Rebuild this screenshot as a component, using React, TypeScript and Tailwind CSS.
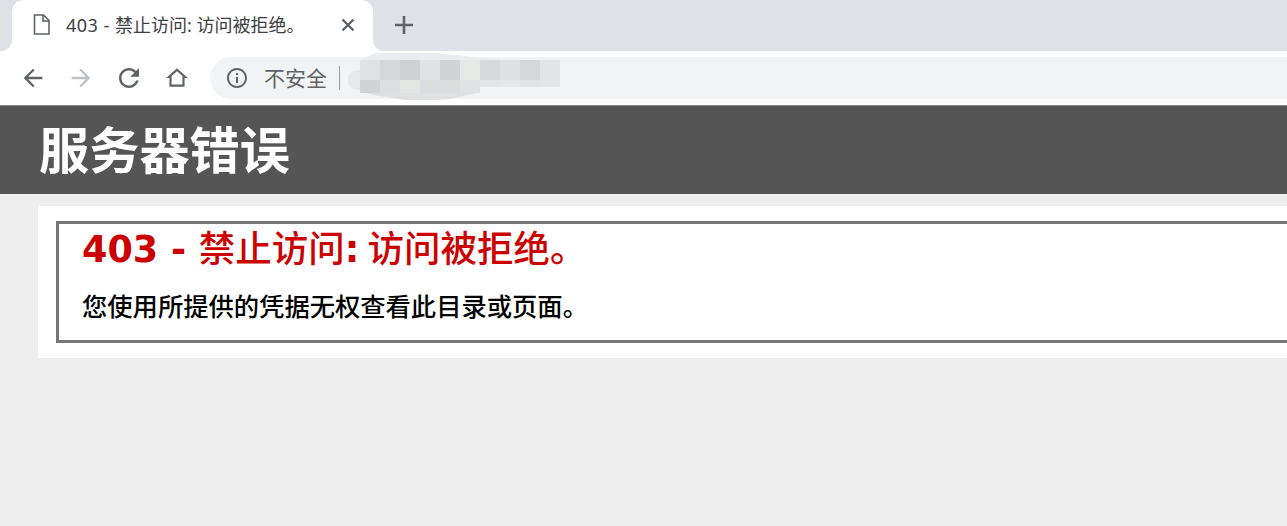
import React from 'react';

const uiFont = '"Noto Sans", "Noto Sans CJK SC", sans-serif';

const ICONS = {
  back: 'M20 11H7.83l5.59-5.59L12 4l-8 8 8 8 1.41-1.41L7.83 13H20v-2z',
  forward: 'M12 4l-1.41 1.41L16.17 11H4v2h12.17l-5.58 5.59L12 20l8-8z',
  reload: 'M17.65 6.35C16.2 4.9 14.21 4 12 4c-4.42 0-7.99 3.58-7.99 8s3.57 8 7.99 8c3.73 0 6.84-2.55 7.73-6h-2.08c-.82 2.33-3.04 4-5.65 4-3.31 0-6-2.69-6-6s2.69-6 6-6c1.66 0 3.14.69 4.22 1.78L13 11h7V4l-2.35 2.35z',
  home: 'M12 5.69l5 4.5V18H7v-7.81l5-4.5M12 3L2 12h3v8h14v-8h3L12 3z',
  info: 'M11 7h2v2h-2zm0 4h2v6h-2zm1-9C6.48 2 2 6.48 2 12s4.48 10 10 10 10-4.48 10-10S17.52 2 12 2zm0 18c-4.41 0-8-3.59-8-8s3.59-8 8-8 8 3.59 8 8-3.59 8-8 8z',
};

function Icon({ d, size, color }: { d: string; size: number; color: string }) {
  return (
    <svg width={size} height={size} viewBox="0 0 24 24" fill={color} className="shrink-0">
      <path d={d} />
    </svg>
  );
}

// pixelated patch hiding the address
const topRow = ['#dfe1e3', '#d6d7d9', '#cfd0d2', '#e1e2e4', '#d1d4d5', '#e6e8e6', '#d8d9dc', '#dfe0e2', '#d6d7da', '#e1e4e7'];
const bottomRow = ['#d2d4d3', '#dcdfe2', '#e3e5e3', '#dcdde0', '#dcdedd', '#e0e3e4', '#e5e6e8', '#e6e8ea', '#e2e5e7', '#e4e7e9'];

function Blur() {
  return (
    <svg width="240" height="52" viewBox="0 0 240 52" className="absolute left-[335px] top-[-1px]">
      <path d="M25 10 L40 3 L100 3 L170 10 Z" fill="#ebecef" />
      <path d="M13 30 Q13 20 25 20 L30 20 L30 40 L25 40 Q13 40 13 30 Z" fill="#e6e8ea" />
      <path d="M25 42 L145 42 L115 49 L100 50 L70 50 L50 47 Z" fill="#dfe0e2" />
      {topRow.map((c, i) => (
        <rect key={i} x={25 + i * 20} y={10} width={20} height={20} fill={c} />
      ))}
      {bottomRow.map((c, i) => (
        <rect key={i} x={25 + i * 20} y={30} width={20} height={i < 6 ? 13 : 7} fill={c} />
      ))}
    </svg>
  );
}

function TabBar() {
  return (
    <div className="flex h-[51px] items-stretch bg-[#dee1e6] pl-[12px]">
      <div className="relative flex w-[361px] items-center rounded-t-[12px] bg-white pl-[21px] pr-[18px]">
        <div className="absolute bottom-0 left-[-12px] h-[12px] w-[12px] bg-[radial-gradient(circle_at_0_0,#dee1e6_12px,#ffffff_12.5px)]" />
        <div className="absolute bottom-0 right-[-12px] h-[12px] w-[12px] bg-[radial-gradient(circle_at_100%_0,#dee1e6_12px,#ffffff_12.5px)]" />
        <svg width="17" height="21" viewBox="0 0 17 21" fill="none" stroke="#5f6368" strokeWidth="1.6" className="mb-[3px] shrink-0">
          <path d="M1.5 1h9l5.5 5.5V20H1.5z" />
          <path d="M10 1v6h6" />
        </svg>
        <span className="ml-[16px] mb-[1px] flex-1 whitespace-nowrap text-[18px] text-[#3c4043]" style={{ fontFamily: uiFont }}>
          <span className="tracking-[0.5px]">403 - </span>禁止访问: 访问被拒绝。
        </span>
        <svg width="14" height="14" viewBox="0 0 14 14" stroke="#5f6368" strokeWidth="2.4" className="mb-[1px]">
          <path d="M1.5 1.5l11 11M12.5 1.5l-11 11" />
        </svg>
      </div>
      <div className="ml-[22px] flex items-center">
        <svg width="18" height="18" viewBox="0 0 18 18" stroke="#5f6368" strokeWidth="2.6" className="mb-[1px]">
          <path d="M9 0v18M0 9h18" />
        </svg>
      </div>
    </div>
  );
}

function Toolbar() {
  return (
    <div className="relative flex h-[55px] items-center border-b border-[#8a8a8a] bg-white">
      <div className="flex w-[210px] items-center pl-[9px]">
        <div className="flex w-[48px] justify-center"><Icon d={ICONS.back} size={28} color="#5f6368" /></div>
        <div className="flex w-[48px] justify-center"><Icon d={ICONS.forward} size={28} color="#bdc1c6" /></div>
        <div className="flex w-[48px] justify-center"><Icon d={ICONS.reload} size={30} color="#5f6368" /></div>
        <div className="flex w-[48px] justify-center"><Icon d={ICONS.home} size={26} color="#5f6368" /></div>
      </div>
      <div className="flex h-[42px] flex-1 items-center rounded-l-full bg-[#f1f3f4] pl-[15px]">
        <Icon d={ICONS.info} size={24} color="#5f6368" />
        <span className="ml-[15px] text-[21px] leading-none text-[#5f6368]" style={{ fontFamily: uiFont }}>不安全</span>
        <div className="ml-[12px] h-[24px] w-px bg-[#9aa0a6]" />
      </div>
      <Blur />
    </div>
  );
}

export default function App() {
  return (
    <div className="h-[526px] w-full overflow-hidden bg-[#eeeeee]">
      <TabBar />
      <Toolbar />
      <div className="flex h-[88px] items-center bg-[#555555] pl-[39px]">
        <h1 className="pb-[6px] text-[50.2px] font-bold leading-none text-white" style={{ fontFamily: '"Noto Sans CJK SC", sans-serif' }}>服务器错误</h1>
      </div>
      <div className="ml-[38px] mt-[12px] h-[152px] bg-white pl-[18px] pt-[15px]">
        <div className="h-[122px] border-[3px] border-r-0 border-[#767676] pl-[23px]">
          <h2 className="mt-[1px] whitespace-nowrap text-[36.5px] leading-[44px] text-[#cc0000]" style={{ fontFamily: '"DejaVu Sans", "Noto Sans CJK SC", sans-serif' }}>
            <span className="font-bold">403 - </span>
            <span className="font-medium" style={{ fontFamily: '"Noto Sans CJK SC", sans-serif' }}>禁止访问</span>
            <span className="font-bold">:</span>
            <span className="font-medium" style={{ fontFamily: '"Noto Sans CJK SC", sans-serif' }}> 访问被拒绝。</span>
          </h2>
          <h3 className="mt-[16px] whitespace-nowrap text-[25.3px] font-medium leading-[34px] text-black" style={{ fontFamily: '"Noto Sans CJK SC", sans-serif' }}>
            您使用所提供的凭据无权查看此目录或页面。
          </h3>
        </div>
      </div>
    </div>
  );
}
